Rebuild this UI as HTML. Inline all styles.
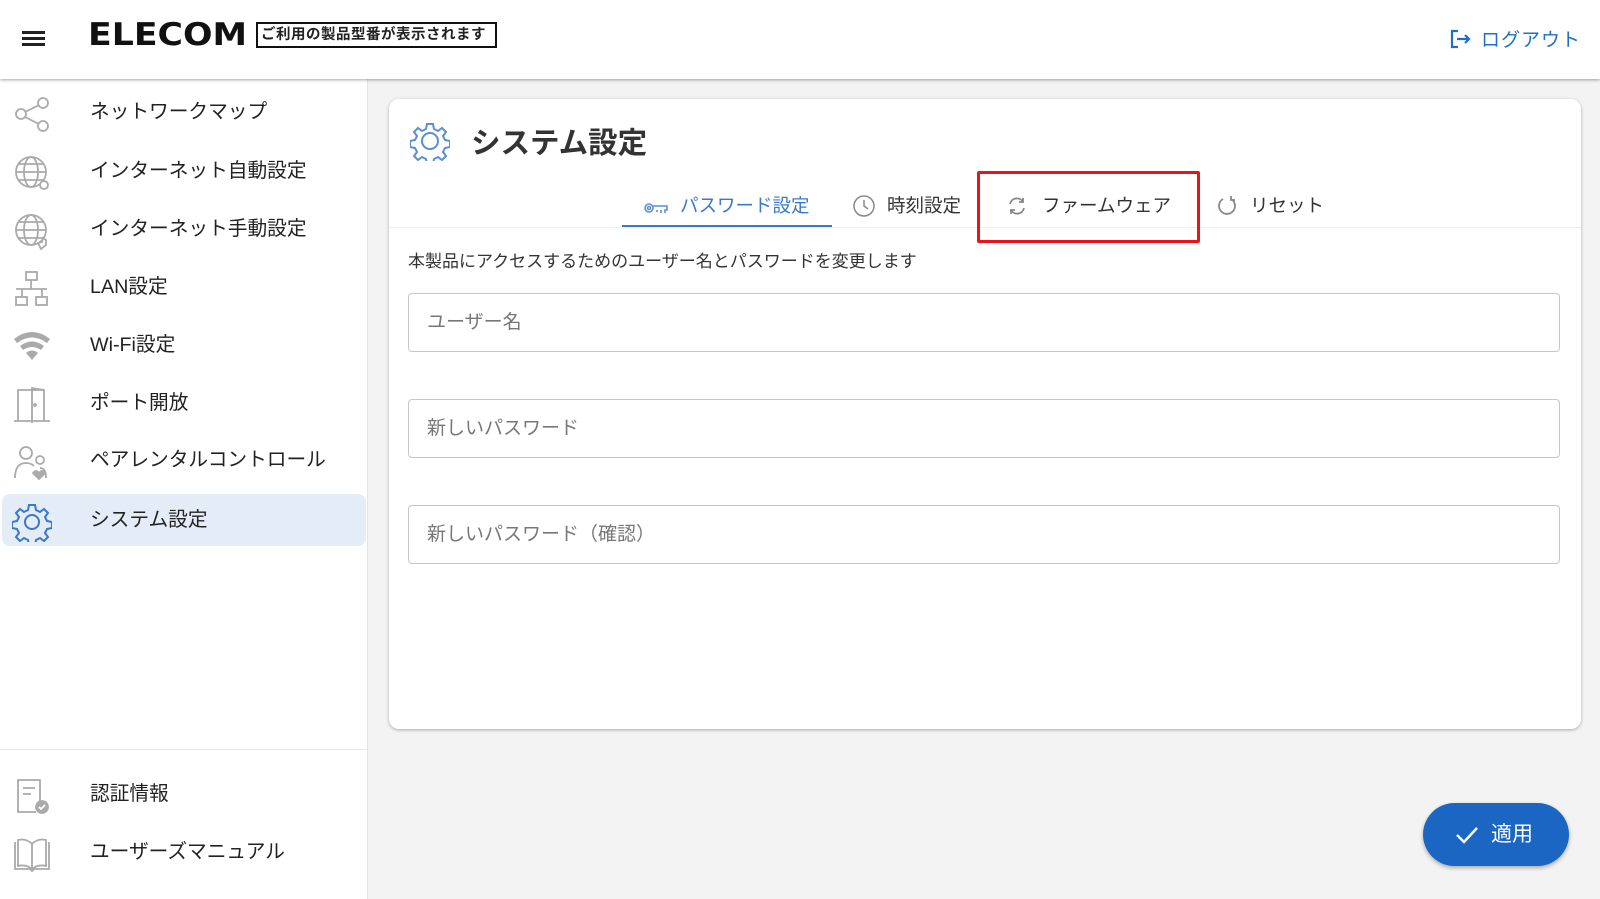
<!DOCTYPE html>
<html><head><meta charset="utf-8"><style>
*{margin:0;padding:0;box-sizing:border-box}
body{width:1600px;height:899px;background:#f3f3f3;font-family:"Liberation Sans","Noto Sans CJK JP",sans-serif;color:#222;position:relative;overflow:hidden}
.a{position:absolute}
#hdr{left:0;top:0;width:1600px;height:79px;background:#fff;box-shadow:0 1px 3px rgba(0,0,0,.35);z-index:3}
#side{left:0;top:79px;width:368px;height:820px;background:#fff;border-right:1px solid #e4e4e4;z-index:2}
.it{position:absolute;left:0;width:368px;height:52px;font-size:19.7px;line-height:52px;padding-left:90px;color:#222}
.it svg{position:absolute;left:12px;top:8px}
.card{left:389px;top:99px;width:1192px;height:630px;background:#fff;border-radius:10px;box-shadow:0 1px 3px rgba(0,0,0,.3)}
.inp{position:absolute;left:19px;width:1152px;height:59px;border:1px solid #c6c6c6;border-radius:4px;font-size:19px;color:#777;padding-left:18px;line-height:57px}
.tab{position:absolute;top:90px;height:38px;font-size:18.5px;line-height:34px;color:#333}
</style></head><body>
<div id="hdr" class="a">
 <div class="a" style="left:22px;top:31px;width:23px;height:3px;background:#222;box-shadow:0 6px 0 #222,0 12px 0 #222"></div>
 <div class="a" style="left:88px;top:17px;font-size:31px;font-weight:900;font-family:'DejaVu Sans',sans-serif;transform:scaleX(1.12);transform-origin:left;color:#111">ELECOM</div>
 <div class="a" style="left:256px;top:22px;width:241px;height:26px;border:2px solid #111;font-size:14.5px;font-weight:bold;line-height:22px;padding-left:3px;letter-spacing:.5px">ご利用の製品型番が表示されます</div>
 <svg class="a" style="left:1449px;top:28px" width="22" height="22" viewBox="0 0 22 22" fill="none" stroke="#1f6fc4" stroke-width="2.2"><path d="M9 3H3v16h6M8 11h12M16 7l4 4-4 4"/></svg>
 <div class="a" style="left:1481px;top:25px;font-size:19px;color:#1f6fc4;letter-spacing:1px">ログアウト</div>
</div>
<div id="side" class="a">
 <div class="it" style="top:7px"><svg width="40" height="40" viewBox="0 0 40 40" fill="none" stroke="#aaa" stroke-width="1.8"><circle cx="9" cy="20" r="5"/><circle cx="31" cy="9" r="5"/><circle cx="31" cy="32" r="5"/><path d="M13 18l14-7M13 23l14 7"/></svg>ネットワークマップ</div>
 <div class="it" style="top:66px"><svg width="40" height="40" viewBox="0 0 40 40" fill="none" stroke="#aaa" stroke-width="1.8"><circle cx="19" cy="19" r="15"/><ellipse cx="19" cy="19" rx="7" ry="15"/><path d="M4 19h30M6 11h26M6 27h26"/><circle cx="32" cy="32" r="4" fill="#fff"/></svg>インターネット自動設定</div>
 <div class="it" style="top:124px"><svg width="40" height="40" viewBox="0 0 40 40" fill="none" stroke="#aaa" stroke-width="1.8"><circle cx="19" cy="19" r="15"/><ellipse cx="19" cy="19" rx="7" ry="15"/><path d="M4 19h30M6 11h26M6 27h26"/><path d="M29 38l-3-6 4-1 1-4 3 2v5z" fill="#fff"/></svg>インターネット手動設定</div>
 <div class="it" style="top:182px"><svg width="40" height="40" viewBox="0 0 40 40" fill="none" stroke="#aaa" stroke-width="1.8"><rect x="14" y="3" width="11" height="8"/><rect x="4" y="28" width="11" height="8"/><rect x="24" y="28" width="11" height="8"/><path d="M19 11v9M4 20h31M10 20v8M30 20v8"/></svg>LAN設定</div>
 <div class="it" style="top:240px"><svg width="40" height="40" viewBox="0 0 40 40" fill="#aaa"><path d="M2 12q18-14 36 0l-3 4q-15-11-30 0z"/><path d="M8 19q12-9 24 0l-3 4q-9-6-18 0z"/><path d="M14 26q6-5 12 0l-6 7z"/></svg>Wi-Fi設定</div>
 <div class="it" style="top:298px"><svg width="40" height="40" viewBox="0 0 40 40" fill="none" stroke="#aaa" stroke-width="1.8"><path d="M2 36h36M6 36V5h26v31M20 38V3l12 2"/><circle cx="23" cy="20" r="1" fill="#aaa"/></svg>ポート開放</div>
 <div class="it" style="top:355px"><svg width="40" height="40" viewBox="0 0 40 40" fill="none" stroke="#aaa" stroke-width="1.8"><circle cx="14" cy="11" r="6"/><path d="M3 36q0-15 11-15 5 0 8 3"/><circle cx="28" cy="18" r="4"/><path d="M34 36q0-10-6-10"/><path d="M21 31q3-4 6 0 3-4 6 0l-6 6z" fill="#aaa"/></svg>ペアレンタルコントロール</div>
 <div class="it" style="top:415px;left:2px;width:364px;background:#e3ecf7;border-radius:8px;padding-left:88px"><svg style="left:10px" width="40" height="40" viewBox="0 0 40 40" fill="none" stroke="#3a78c9" stroke-width="2"><path d="M17 3h6l1 5 4 2 4-3 4 4-3 4 2 4 5 1v6l-5 1-2 4 3 4-4 4-4-3-4 2-1 5h-6l-1-5-4-2-4 3-4-4 3-4-2-4-5-1v-6l5-1 2-4-3-4 4-4 4 3 4-2z"/><circle cx="20" cy="20" r="7"/></svg>システム設定</div>
 <div class="a" style="left:0;top:670px;width:368px;height:1px;background:#e6e6e6"></div>
 <div class="it" style="top:689px"><svg width="40" height="40" viewBox="0 0 40 40" fill="none" stroke="#aaa" stroke-width="1.8"><path d="M28 26V4H6v32h18"/><path d="M11 12h12M11 18h8"/><circle cx="30" cy="31" r="6" fill="#aaa"/><path d="M27 31l2 2 4-4" stroke="#fff"/></svg>認証情報</div>
 <div class="it" style="top:747px"><svg width="40" height="40" viewBox="0 0 40 40" fill="none" stroke="#aaa" stroke-width="1.8"><path d="M3 8v27h15l2 2 2-2h15V8M20 10v25M6 6q8-2 14 4 6-6 14-4v26q-8-2-14 3-6-5-14-3z"/></svg>ユーザーズマニュアル</div>
</div>
<div class="a card">
 <svg class="a" style="left:21px;top:22px" width="40" height="40" viewBox="0 0 40 40" fill="none" stroke="#5a8fd1" stroke-width="2"><path d="M17 3h6l1 5 4 2 4-3 4 4-3 4 2 4 5 1v6l-5 1-2 4 3 4-4 4-4-3-4 2-1 5h-6l-1-5-4-2-4 3-4-4 3-4-2-4-5-1v-6l5-1 2-4-3-4 4-4 4 3 4-2z"/><circle cx="20" cy="20" r="8"/></svg>
 <div class="a" style="left:82px;top:21px;font-size:29.5px;font-weight:bold;color:#333">システム設定</div>
 <div class="a" style="left:0;top:128px;width:1192px;height:1px;background:#eee"></div>
 <div class="tab" style="left:233px;width:210px;border-bottom:2px solid #3a78c9;color:#3a78c9;padding-left:22px"><svg style="vertical-align:-3px;margin-right:12px" width="24" height="14" viewBox="0 0 24 14" fill="none" stroke="#5a8fd1" stroke-width="1.6"><circle cx="5" cy="7" r="4"/><circle cx="5" cy="7" r="1.5"/><path d="M9 5h14v4h-2v3M17 9v3M13 9v2"/></svg>パスワード設定</div>
 <div class="tab" style="left:464px"><svg style="vertical-align:-5px;margin-right:12px" width="22" height="22" viewBox="0 0 22 22" fill="none" stroke="#888" stroke-width="1.5"><circle cx="11" cy="11" r="10"/><path d="M11 5v6l4 3"/></svg>時刻設定</div>
 <div class="tab" style="left:617px"><svg style="vertical-align:-5px;margin-right:14px" width="22" height="22" viewBox="0 0 22 22" fill="none" stroke="#888" stroke-width="1.8"><path d="M4 9a7 7 0 0 1 13-2M18 13a7 7 0 0 1-13 2M17 3v4h-4M5 19v-4h4"/></svg>ファームウェア</div>
 <div class="tab" style="left:827px"><svg style="vertical-align:-5px;margin-right:12px" width="22" height="22" viewBox="0 0 22 22" fill="none" stroke="#888" stroke-width="1.8"><path d="M15 4a8 8 0 1 1-8 0M15 1v4h4"/></svg>リセット</div>
 <div class="a" style="left:588px;top:72px;width:223px;height:72px;border:3px solid #e8141a;border-radius:2px"></div>
 <div class="a" style="left:19px;top:148px;font-size:17px;color:#333">本製品にアクセスするためのユーザー名とパスワードを変更します</div>
 <div class="inp" style="top:194px">ユーザー名</div>
 <div class="inp" style="top:300px">新しいパスワード</div>
 <div class="inp" style="top:406px">新しいパスワード（確認）</div>
</div>
<div class="a" style="left:1423px;top:803px;width:146px;height:63px;border-radius:32px;background:#1a66c2;box-shadow:0 2px 4px rgba(0,0,0,.3);color:#fff;font-size:21px;line-height:63px;padding-left:68px">適用
 <svg class="a" style="left:32px;top:22px" width="24" height="20" viewBox="0 0 24 20" fill="none" stroke="#fff" stroke-width="2.5"><path d="M2 10l7 7L22 3"/></svg></div>
</body></html>
